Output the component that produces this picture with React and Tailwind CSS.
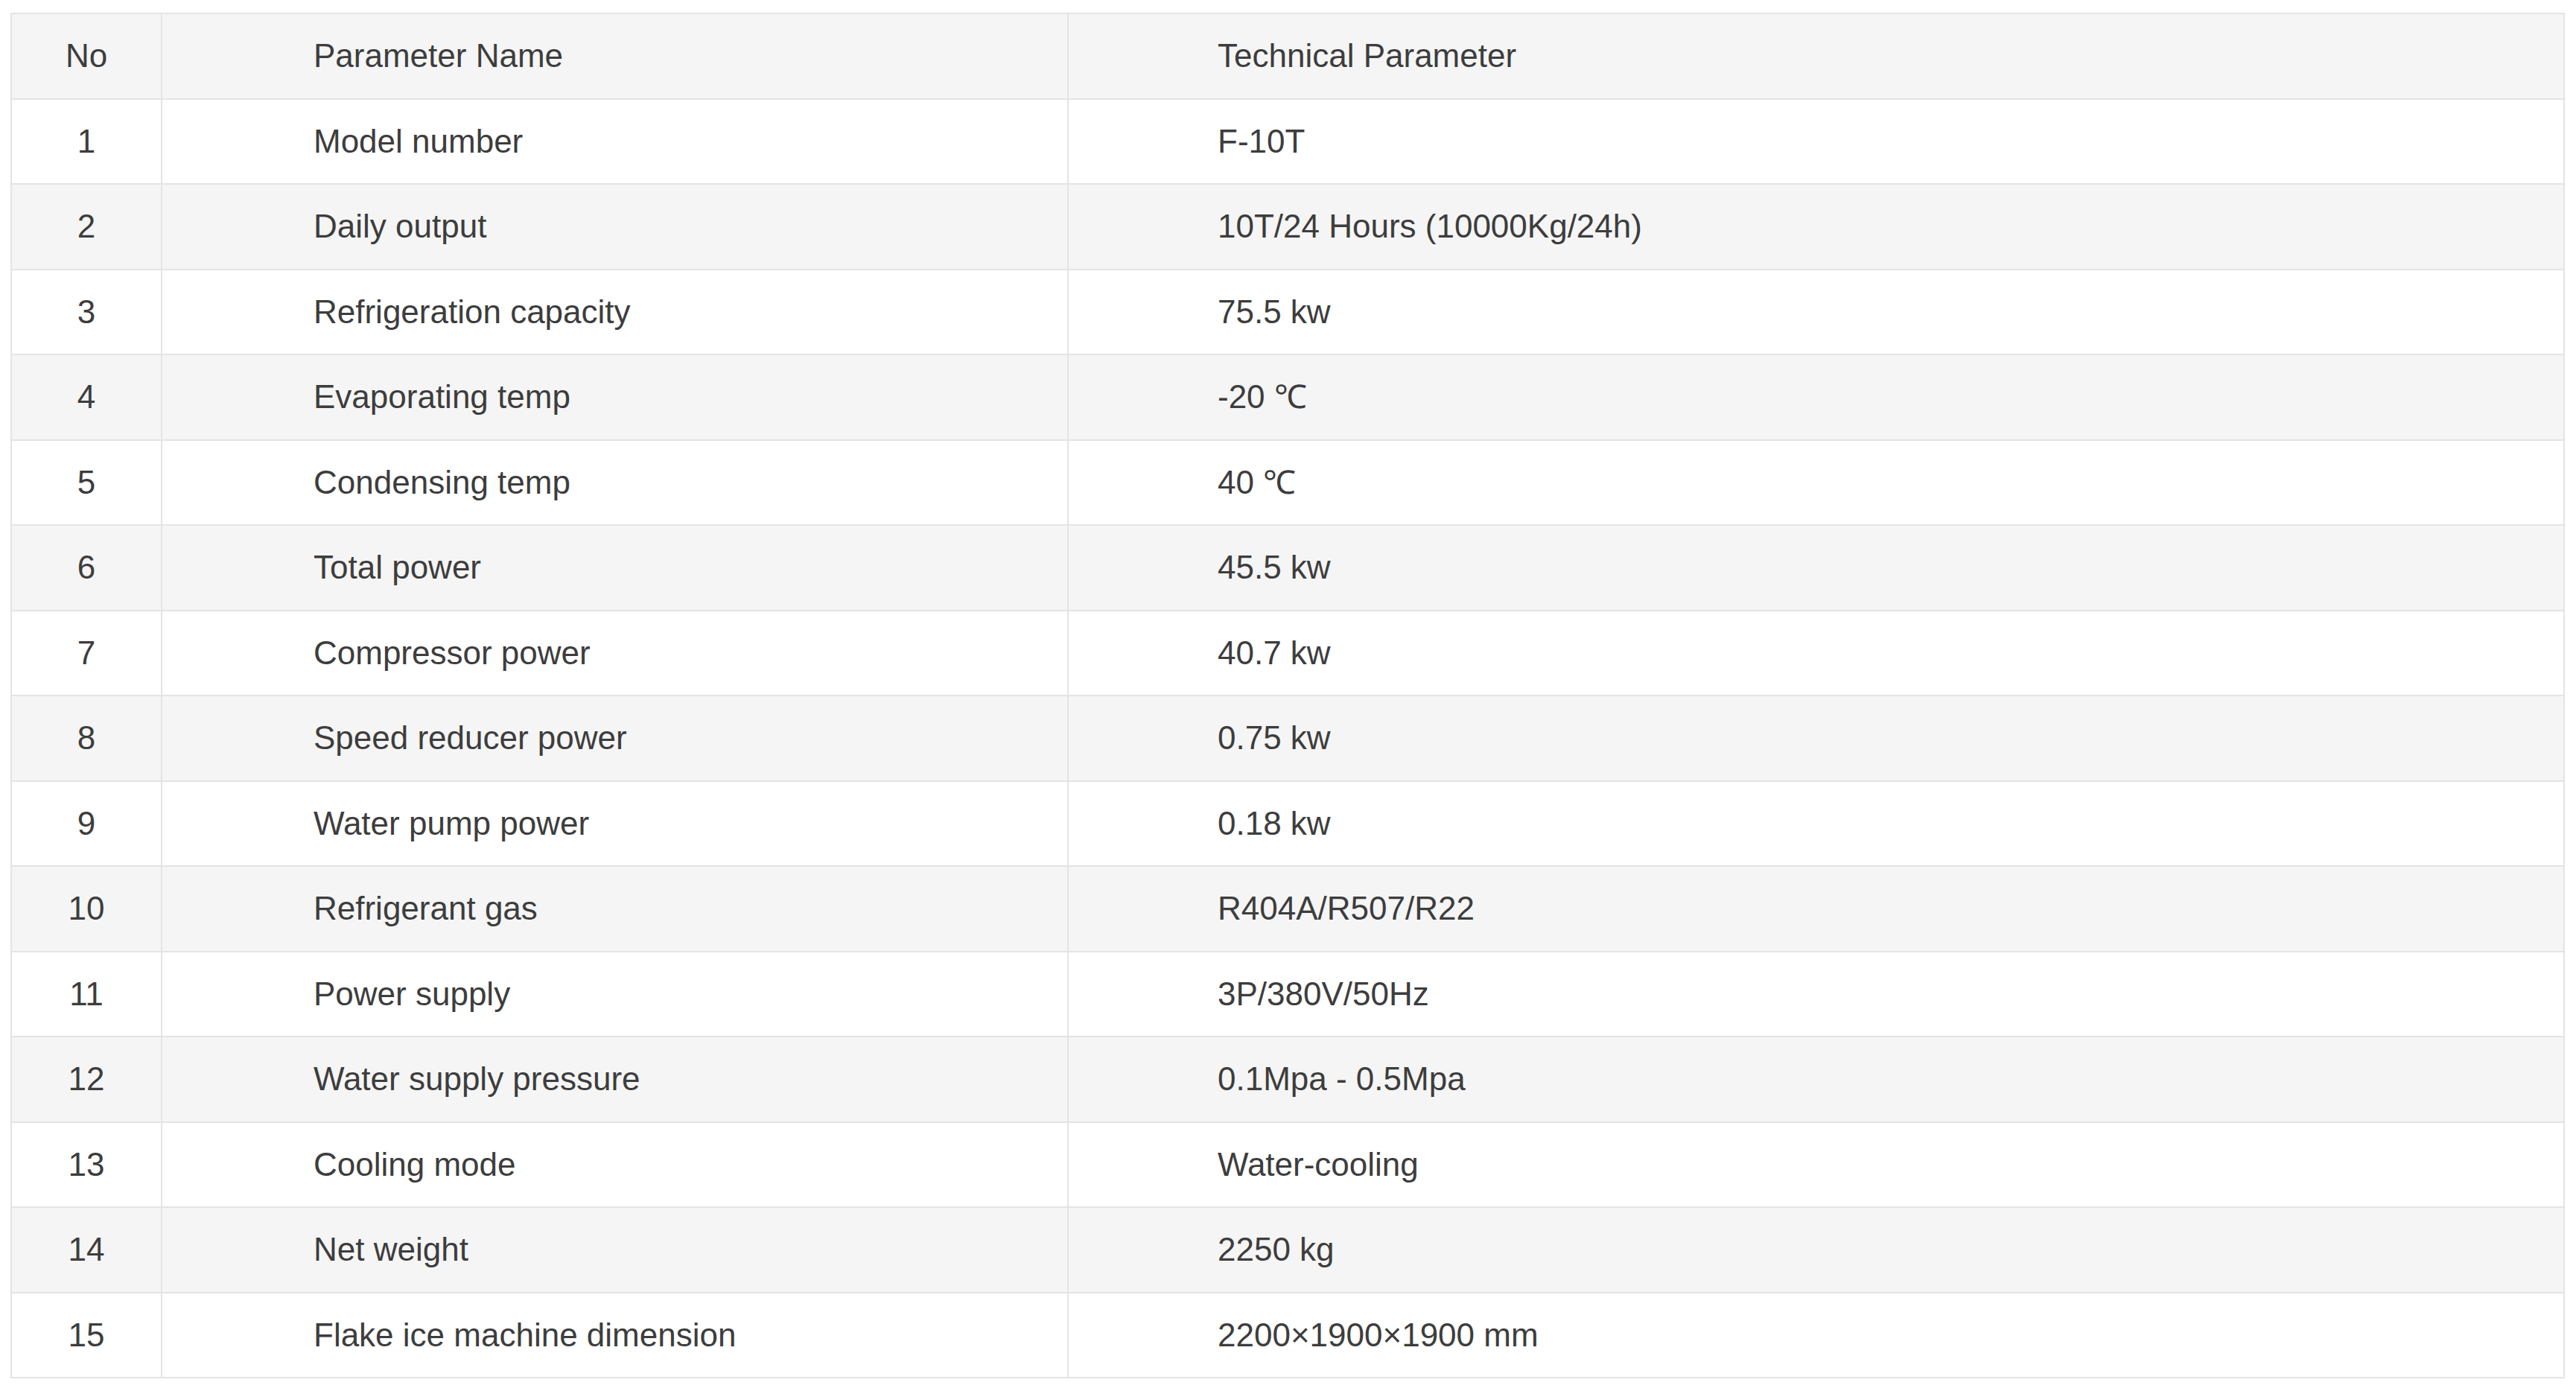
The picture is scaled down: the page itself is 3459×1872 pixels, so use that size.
const rows = [
  ["1", "Model number", "F-10T"],
  ["2", "Daily output", "10T/24 Hours (10000Kg/24h)"],
  ["3", "Refrigeration capacity", "75.5 kw"],
  ["4", "Evaporating temp", "-20 ℃"],
  ["5", "Condensing temp", "40 ℃"],
  ["6", "Total power", "45.5 kw"],
  ["7", "Compressor power", "40.7 kw"],
  ["8", "Speed reducer power", "0.75 kw"],
  ["9", "Water pump power", "0.18 kw"],
  ["10", "Refrigerant gas", "R404A/R507/R22"],
  ["11", "Power supply", "3P/380V/50Hz"],
  ["12", "Water supply pressure", "0.1Mpa - 0.5Mpa"],
  ["13", "Cooling mode", "Water-cooling"],
  ["14", "Net weight", "2250 kg"],
  ["15", "Flake ice machine dimension", "2200×1900×1900 mm"],
];

// Spec sheet table: header + 15 parameter rows, zebra striped
function App() {
  const cell = "border-2 border-[#e4e4e4] h-[114.5px] align-middle";
  return (
    <div className="min-h-screen bg-white pt-[17px] pl-[14px] font-['Liberation_Sans',Arial,sans-serif] text-[44px] leading-none text-[#3d3d3d]">
      <table className="border-collapse w-[3430px] table-fixed">
        <colgroup>
          <col className="w-[202px]" />
          <col className="w-[1217px]" />
          <col />
        </colgroup>
        <thead>
          <tr className="bg-[#f5f5f5]">
            <th className={`${cell} font-normal text-center`}>No</th>
            <th className={`${cell} font-normal text-left pl-[203px]`}>Parameter Name</th>
            <th className={`${cell} font-normal text-left pl-[200px]`}>Technical Parameter</th>
          </tr>
        </thead>
        <tbody>
          {rows.map(([no, name, value], i) => (
            <tr key={no} className={i % 2 === 1 ? "bg-[#f5f5f5]" : "bg-white"}>
              <td className={`${cell} text-center`}>{no}</td>
              <td className={`${cell} text-left pl-[203px]`}>{name}</td>
              <td className={`${cell} text-left pl-[200px]`}>{value}</td>
            </tr>
          ))}
        </tbody>
      </table>
    </div>
  );
}

export default App;
